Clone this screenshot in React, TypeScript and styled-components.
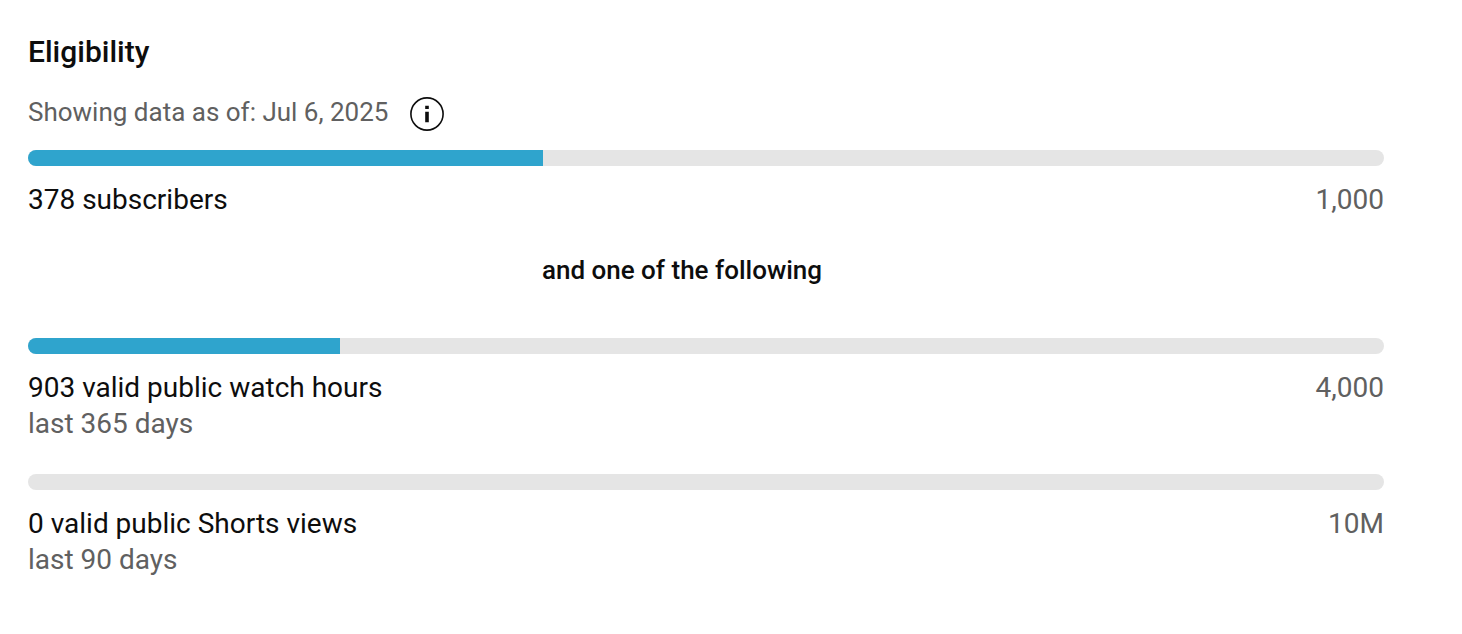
import styled, { createGlobalStyle } from "styled-components";

const goals = [
  {
    value: 903,
    max: 4000,
    label: "903 valid public watch hours",
    limit: "4,000",
    period: "last 365 days",
  },
  {
    value: 0,
    max: 10000000,
    label: "0 valid public Shorts views",
    limit: "10M",
    period: "last 90 days",
  },
];

type GoalProps = {
  value: number;
  max: number;
  label: string;
  limit: string;
  period?: string;
};

function Goal({ value, max, label, limit, period }: GoalProps) {
  const percent = Math.ceil((value / max) * 100);

  return (
    <div>
      <Track>
        <Fill style={{ width: `${percent}%` }} />
      </Track>
      <GoalRow>
        <GoalLabel>{label}</GoalLabel>
        <Limit>{limit}</Limit>
      </GoalRow>
      {period && <Period>{period}</Period>}
    </div>
  );
}

function App() {
  return (
    <>
      <GlobalStyle />
      <Wrapper>
        <Title>Eligibility</Title>
        <DateRow>
          <DateText>Showing data as of: Jul 6, 2025</DateText>
          <InfoIcon />
        </DateRow>

        <Goal value={378} max={1000} label="378 subscribers" limit="1,000" />
        <Divider>and one of the following</Divider>

        <GoalList>
          {goals.map((goal) => (
            <Goal key={goal.label} {...goal} />
          ))}
        </GoalList>
      </Wrapper>
    </>
  );
}

function InfoIcon() {
  return (
    <Icon viewBox="0 0 34 34">
      <circle cx="17" cy="17" r="16.1" fill="none" stroke="#0d0d0d" strokeWidth="1.6" />
      <path d="M15.2 8.8h3.6v3.1h-3.6zM15.2 14.8h3.6v10.4h-3.6z" fill="#0d0d0d" />
    </Icon>
  );
}

const GlobalStyle = createGlobalStyle`
  body {
    margin: 0;
    background-color: white;
    font-family: Roboto, sans-serif;
    color: #0d0d0d;
  }
`;

const Wrapper = styled.div`
  box-sizing: border-box;
  width: 1384px;
  padding: 32px 0 0 28px;
`;

const Title = styled.div`
  font-size: 30px;
  font-weight: 500;
  line-height: 40px;
`;

const DateRow = styled.div`
  display: flex;
  align-items: center;
  gap: 22px;
  height: 34px;
  margin: 25px 0 19px;
`;

const DateText = styled.div`
  font-size: 26px;
  line-height: 32px;
  color: #606060;
  margin-bottom: 4px;
`;

const Icon = styled.svg`
  width: 34px;
  height: 34px;
`;

const Track = styled.div`
  height: 16px;
  border-radius: 8px;
  background-color: #e5e5e5;
  overflow: hidden;
`;

const Fill = styled.div`
  height: 100%;
  background-color: #2fa4cd;
`;

const GoalRow = styled.div`
  display: flex;
  justify-content: space-between;
  margin-top: 16px;
  font-size: 28px;
  line-height: 36px;
`;

const GoalLabel = styled.div``;

const Limit = styled.div`
  color: #606060;
`;

const Period = styled.div`
  font-size: 28px;
  line-height: 36px;
  color: #606060;
`;

const Divider = styled.div`
  margin: 35px 0 51px;
  padding-right: 48px;
  font-size: 26px;
  font-weight: 500;
  line-height: 34px;
  text-align: center;
`;

const GoalList = styled.div`
  display: flex;
  flex-direction: column;
  gap: 32px;
`;

export default App;
